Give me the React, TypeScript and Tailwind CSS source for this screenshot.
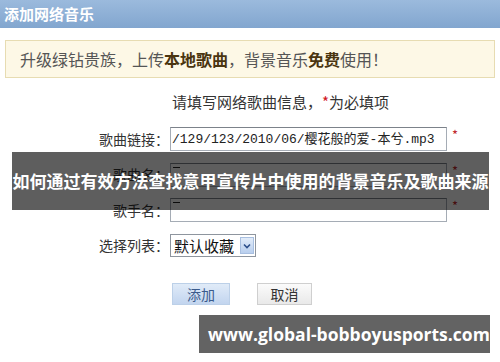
import React from 'react';

const cjk = { fontFamily: '"Noto Sans CJK SC", "Liberation Sans", sans-serif' };

// Form row: label on the left, field and red star on the right
const Row = ({ label, children, star = true }: { label: string; children: React.ReactNode; star?: boolean }) => (
  <div className="flex items-center h-[24px]">
    <div className="w-[170px] text-right text-[14px] text-[#333] pr-[1px]">{label}</div>
    {children}
    {star && <span className="ml-[5px] text-[13px] text-[#c0282d] self-start -mt-[2px]">*</span>}
  </div>
);

const TextBox = ({ value }: { value?: string }) => (
  <div className="w-[277px] h-[24px] border border-[#a5acb5] border-t-[#7c828a] bg-white overflow-hidden whitespace-nowrap flex items-center pl-[1px]">
    {value ? (
      <span
        className="text-[13px] text-[#222] leading-none"
        style={{ fontFamily: '"Liberation Mono", "Noto Sans CJK SC", monospace' }}
      >
        {value}
      </span>
    ) : (
      <span className="block w-[7px] h-[1px] bg-[#222] self-start mt-[3px] ml-[1px]" />
    )}
  </div>
);

export default function App() {
  return (
    <div className="relative w-[500px] h-[362px] bg-white overflow-hidden" style={cjk}>
      {/* Header */}
      <div className="h-[28px] bg-gradient-to-b from-[#9bbadd] to-[#82a6cf] flex items-center pl-[4px]">
        <span className="text-white font-bold text-[15px]">添加网络音乐</span>
      </div>

      {/* Notice */}
      <div className="mx-[5px] mt-[12px] h-[38px] bg-[#fdf8e6] border border-[#e7dcb2] flex items-center pl-[14px] text-[16px] text-[#555]">
        <span>
          升级绿钻贵族，上传<b className="text-[#4a3510]">本地歌曲</b>，背景音乐<b className="text-[#4a3510]">免费</b>使用！
        </span>
      </div>

      {/* Subtitle */}
      <div className="mt-[14px] h-[20px] pl-[172px] flex items-center text-[15px] text-[#333]">
        请填写网络歌曲信息，<span className="text-[#d0141c]">*</span>为必填项
      </div>

      {/* Form */}
      <div className="mt-[15px] flex flex-col gap-[11.5px]">
        <Row label="歌曲链接：">
          <TextBox value="/129/123/2010/06/樱花般的爱-本兮.mp3" />
        </Row>
        <Row label="歌曲名：">
          <TextBox />
        </Row>
        <Row label="歌手名：">
          <TextBox />
        </Row>
        <Row label="选择列表：" star={false}>
          <div className="w-[86px] h-[23px] border border-[#8e959e] bg-white flex items-center justify-between pl-[3px] pr-[1px]">
            <span className="text-[15px] text-[#111] leading-none">默认收藏</span>
            <span className="w-[14px] h-[17px] bg-gradient-to-b from-[#e2ecf9] to-[#b9cfee] border border-[#a8bfe0] flex items-center justify-center">
              <svg width="8" height="6" viewBox="0 0 8 6">
                <path d="M1 1.5 L4 4.5 L7 1.5" fill="none" stroke="#2d4f8a" strokeWidth="1.6" />
              </svg>
            </span>
          </div>
        </Row>
      </div>

      {/* Buttons */}
      <div className="mt-[25px] pl-[172px] flex gap-[27px]">
        <button className="w-[58px] h-[22px] bg-gradient-to-b from-[#e0ebf8] to-[#c2d5ef] border border-[#bcd0e8] text-[14px] text-[#3b5b8c] leading-none">
          添加
        </button>
        <button className="w-[55px] h-[22px] bg-gradient-to-b from-[#fbfbfb] to-[#e9e9e9] border border-[#cfcfcf] text-[14px] text-[#333] leading-none">
          取消
        </button>
      </div>

      {/* Title overlay band */}
      <div className="absolute left-[12px] top-[152px] w-[477px] h-[58px] bg-[rgba(0,0,0,0.63)] flex items-center justify-center">
        <span className="text-white font-bold text-[17px] whitespace-nowrap">
          如何通过有效方法查找意甲宣传片中使用的背景音乐及歌曲来源
        </span>
      </div>

      {/* Watermark */}
      <div className="absolute left-[199px] top-[315px] w-[291px] h-[38px] bg-[rgba(0,0,0,0.61)] flex items-center pl-[9px]">
        <span
          className="text-white font-bold text-[17.5px] whitespace-nowrap"
          style={{ fontFamily: '"Open Sans", "Liberation Sans", sans-serif' }}
        >
          www.global-bobboyusports.com
        </span>
      </div>
    </div>
  );
}
